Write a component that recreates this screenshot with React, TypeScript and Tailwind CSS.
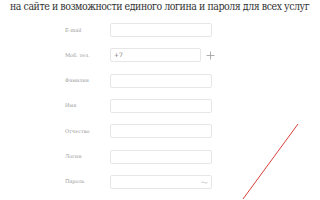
import React from 'react';

const fields = ['E-mail', 'Моб. тел.', 'Фамилия', 'Имя', 'Отчество', 'Логин', 'Пароль'];

const FieldRow: React.FC<{ label: string }> = ({ label }) => {
  const isPhone = label === 'Моб. тел.';
  const isPassword = label === 'Пароль';
  return (
    <div className="flex h-[14px] items-center">
      <div className="w-[45px] pl-[65px] box-content text-[5px] leading-none text-[#9a9a9a]">{label}</div>
      <div
        className={`relative flex h-[14px] items-center rounded-[2px] border border-[#e6e6e6] bg-white ${
          isPhone ? 'w-[91px]' : 'w-[102px]'
        }`}
      >
        {isPhone ? <span className="pl-[3px] text-[6px] leading-none text-[#555]">+7</span> : null}
        {isPassword ? (
          <svg className="absolute right-[3px] top-[5px]" width="7" height="3" viewBox="0 0 7 3">
            <path d="M0.5 1.5 Q2 0.2 3.5 1.5 T6.5 1.5" fill="none" stroke="#b5b5b5" strokeWidth="0.7" />
          </svg>
        ) : null}
      </div>
      {isPhone ? (
        <svg className="ml-[5px]" width="9" height="9" viewBox="0 0 9 9">
          <path d="M4.5 0.5 V8.5 M0.5 4.5 H8.5" stroke="#9a9a9a" strokeWidth="0.8" />
        </svg>
      ) : null}
    </div>
  );
};

export default function App() {
  return (
    <div className="relative h-[200px] w-[320px] overflow-hidden bg-white font-['DejaVu_Serif',serif]">
      <div className="pl-[10px] text-[10.5px] leading-[12px] font-stretch-condensed tracking-[-0.45px] text-[#333] whitespace-nowrap">
        на сайте и возможности единого логина и пароля для всех услуг
      </div>
      <div className="mt-[11px] flex flex-col gap-[11.33px]">
        {fields.map((f) => (
          <FieldRow key={f} label={f} />
        ))}
      </div>
      <svg className="pointer-events-none absolute left-0 top-0" width="320" height="200" viewBox="0 0 320 200">
        <line x1="243" y1="199" x2="298" y2="124" stroke="#d8403b" strokeWidth="1" />
      </svg>
    </div>
  );
}
